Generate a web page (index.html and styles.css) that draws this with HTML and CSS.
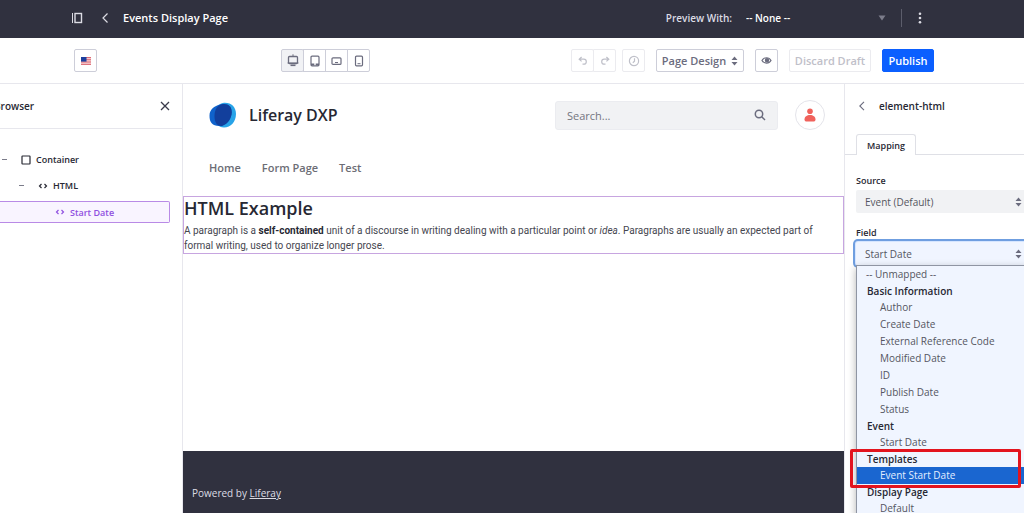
FILE: index.html
```
<!DOCTYPE html>
<html lang="en">
<head>
    <meta charset="utf-8">
    <meta name="viewport" content="width=device-width, initial-scale=1">
    <title>Events Display Page</title>
    <link rel="stylesheet" href="styles.css">
</head>
<body>
<header class="topbar">
    <button class="icon-btn" aria-label="Toggle product menu">
        <svg width="12" height="12" viewBox="0 0 12 12" fill="none" stroke="currentColor"><path d="M1.500 1v10" stroke-width="1"/><rect x="4" y="1.500" width="6.500" height="9" stroke-width="1.400"/></svg>
    </button>
    <a class="back" href="#" aria-label="Back">
        <svg width="8" height="12" viewBox="0 0 8 12" fill="none" stroke="currentColor" stroke-width="1.200"><path d="M6.500 1.500 2 6l4.500 4.500"/></svg>
    </a>
    <h1 class="topbar-title">Events Display Page</h1>
    <div class="preview">
        <label for="preview-with">Preview With:</label>
        <span class="preview-select">
            <select id="preview-with"><option>-- None --</option></select>
            <svg width="8" height="6" viewBox="0 0 8 6"><path d="M0.500 0.500h7L4 5.500z" fill="#7b7c8a"/></svg>
        </span>
    </div>
    <button class="icon-btn kebab" aria-label="Options">
        <svg width="4" height="12" viewBox="0 0 4 12" fill="currentColor"><circle cx="2" cy="1.700" r="1.300"/><circle cx="2" cy="6" r="1.300"/><circle cx="2" cy="10.300" r="1.300"/></svg>
    </button>
</header>

<div class="toolbar">
    <button class="btn btn-icon" aria-label="Language: English">
        <svg width="10" height="8" viewBox="0 0 10 8"><rect width="10" height="8" fill="#f4c9cd"/><path d="M0 .5h10M0 2.700h10M0 5h10M0 7.400h10" stroke="#dc6b75" stroke-width="1"/><rect width="5.500" height="4.600" fill="#1d3f9e"/></svg>
    </button>

    <div class="btn-group devices">
        <button class="btn btn-icon active" aria-label="Desktop">
            <svg width="12" height="13" viewBox="0 0 12 13" fill="none" stroke="currentColor"><rect x="1.500" y="2.500" width="9" height="7" rx="1" stroke-width="1.300"/><path d="M6 .3v2M.5 9h11" stroke-width="1"/><path d="M3.500 11.300h5" stroke-width="1.600"/></svg>
        </button>
        <button class="btn btn-icon" aria-label="Tablet">
            <svg width="10" height="12" viewBox="0 0 10 12" fill="none" stroke="currentColor"><rect x="1" y="1.200" width="8" height="9.600" rx="1" stroke-width="1.200"/><path d="M1 9.600h3.300M5.700 9.600H9" stroke-width="2"/></svg>
        </button>
        <button class="btn btn-icon" aria-label="Landscape phone">
            <svg width="11" height="10" viewBox="0 0 11 10" fill="none" stroke="currentColor"><rect x="1" y="1.800" width="9" height="6.600" rx="1" stroke-width="1.200"/><path d="M4 6.500h3" stroke-width="1"/></svg>
        </button>
        <button class="btn btn-icon" aria-label="Portrait phone">
            <svg width="10" height="12" viewBox="0 0 10 12" fill="none" stroke="currentColor"><rect x="1.500" y="1.200" width="7" height="9.600" rx="1" stroke-width="1.200"/><path d="M3.500 8.700h3" stroke-width="1"/></svg>
        </button>
    </div>

    <div class="actions">
        <div class="btn-group">
            <button class="btn btn-icon" aria-label="Undo" disabled>
                <svg width="10" height="10" viewBox="0 0 10 10" fill="none" stroke="currentColor" stroke-width="1.200"><path d="M3.600 1 1.200 3.200l2.400 2.200M1.500 3.200h4.300a2.500 2.500 0 0 1 0 5H4.500"/></svg>
            </button>
            <button class="btn btn-icon" aria-label="Redo" disabled>
                <svg width="10" height="10" viewBox="0 0 10 10" fill="none" stroke="currentColor" stroke-width="1.200"><path d="M6.400 1l2.400 2.200-2.400 2.200M8.500 3.200H4.200a2.500 2.500 0 0 0 0 5h1.300"/></svg>
            </button>
        </div>
        <button class="btn btn-icon history" aria-label="History" disabled>
            <svg width="12" height="12" viewBox="0 0 12 12" fill="none" stroke="currentColor" stroke-width="1.200"><circle cx="6" cy="6" r="4.600"/><path d="M6.500 3.200V6.200L4.800 7.700"/></svg>
        </button>
        <button class="btn btn-design">Page Design
            <svg width="7" height="10" viewBox="0 0 7 10" fill="currentColor"><path d="M3.500.5 6.500 4h-6zM3.500 9.500.5 6h6z"/></svg>
        </button>
        <button class="btn btn-icon" aria-label="Preview">
            <svg width="11" height="9" viewBox="0 0 11 9" fill="none" stroke="currentColor" stroke-width="1.200"><path d="M1 4.500C3 .8 8 .8 10 4.500 8 8 3 8 1 4.500z"/><circle cx="6" cy="4.300" r="1.600" fill="currentColor"/></svg>
        </button>
        <button class="btn btn-draft" disabled>Discard Draft</button>
        <button class="btn btn-primary">Publish</button>
    </div>
</div>

<div class="editor">
    <!-- Page structure tree -->
    <aside class="browser">
        <div class="browser-header">
            <h2 class="panel-title">Browser</h2>
            <button class="icon-btn" aria-label="Close">
                <svg width="10" height="10" viewBox="0 0 10 10" fill="none" stroke="#393a4a" stroke-width="1.300"><path d="M1 1l8 8M9 1L1 9"/></svg>
            </button>
        </div>
        <ul class="tree">
            <li class="tree-item">
                <span class="tree-toggle"></span>
                <svg width="10" height="10" viewBox="0 0 10 10" fill="none" stroke="currentColor" stroke-width="1.200"><rect x="1" y="1" width="8" height="8" rx=".5"/></svg>
                Container
            </li>
            <li class="tree-item level-2">
                <span class="tree-toggle"></span>
                <svg width="10" height="10" viewBox="0 0 10 10" fill="none" stroke="currentColor" stroke-width="1.200"><path d="M3.500 3 1.500 5l2 2M6.500 3l2 2-2 2"/></svg>
                HTML
            </li>
            <li class="tree-item level-3 selected">
                <svg width="10" height="10" viewBox="0 0 10 10" fill="none" stroke="currentColor" stroke-width="1.200"><path d="M3.500 3 1.500 5l2 2M6.500 3l2 2-2 2"/></svg>
                Start Date
            </li>
        </ul>
    </aside>

    <main class="page">
        <div class="page-header">
            <svg width="28" height="26" viewBox="0 0 28 26"><path d="M15 .8C22 .3 27.200 5 27 12c-.2 8-5 13.500-12 13.500-6 0-8.500-4-8.500-11C6.500 6 9 1.300 15 .8z" fill="#27a3e8"/><path d="M11.500 2.500C18 1 22.500 4 22.500 10.500 22.500 17 18 24 10 24 3.500 24 .3 20 .5 13.500.7 7.500 5 3.800 11.500 2.500z" fill="#0f62cb"/><path d="M14 2c5.500-.5 9 3 8.800 8.500-.3 6-4.300 11.500-9.800 13.500-5 .5-7.500-3.500-7.500-10C5.500 7.500 8.500 2.700 14 2z" fill="#123f9c"/></svg>
            <span class="site-name">Liferay DXP</span>
            <form class="search">
                <input type="text" placeholder="Search..." aria-label="Search">
                <button type="button" class="icon-btn" aria-label="Submit search">
                    <svg width="12" height="12" viewBox="0 0 12 12" fill="none" stroke="#6b6c7e" stroke-width="1.500"><circle cx="5" cy="5" r="3.700"/><path d="M7.700 7.700l3.300 3.300"/></svg>
                </button>
            </form>
            <button class="avatar" aria-label="User profile">
                <svg width="12" height="14" viewBox="0 0 12 14" fill="#f0625c"><circle cx="6" cy="3.200" r="2.800"/><path d="M.5 11.500C.5 8.500 3 7 6 7s5.500 1.500 5.500 4.500c0 1.500-1 2-2 2h-7c-1 0-2-.5-2-2z"/></svg>
            </button>
        </div>
        <nav class="page-nav">
            <a href="#">Home</a>
            <a href="#">Form Page</a>
            <a href="#">Test</a>
        </nav>
        <section class="fragment">
            <h2>HTML Example</h2>
            <p>A paragraph is a <strong>self-contained</strong> unit of a discourse in writing dealing with a particular point or <em>idea</em>. Paragraphs are usually an expected part of formal writing, used to organize longer prose.</p>
        </section>
        <footer class="page-footer">Powered by&nbsp;<a href="#">Liferay</a></footer>
    </main>

    <!-- Mapping panel -->
    <aside class="config">
        <div class="config-header">
            <a href="#" aria-label="Back to parent">
                <svg width="8" height="10" viewBox="0 0 8 10" fill="none" stroke="currentColor" stroke-width="1.100"><path d="M6 .8 1.800 5 6 9.200"/></svg>
            </a>
            <h2 class="panel-title">element-html</h2>
        </div>
        <div class="tabs"><button class="tab">Mapping</button></div>
        <div class="fields">
            <label for="source">Source</label>
            <div class="select">
                <select id="source"><option>Event (Default)</option></select>
                <svg width="7" height="10" viewBox="0 0 7 10" fill="#6b6c7e"><path d="M3.500.5 6.500 4h-6zM3.500 9.500.5 6h6z"/></svg>
            </div>
            <label for="field">Field</label>
            <div class="select open">
                <select id="field"><option>Start Date</option></select>
                <svg width="7" height="10" viewBox="0 0 7 10" fill="#6b6c7e"><path d="M3.500.5 6.500 4h-6zM3.500 9.500.5 6h6z"/></svg>
                <ul class="menu">
                    <li class="menu-empty">-- Unmapped --</li>
                    <li class="menu-group">Basic Information</li>
                    <li>Author</li>
                    <li>Create Date</li>
                    <li>External Reference Code</li>
                    <li>Modified Date</li>
                    <li>ID</li>
                    <li>Publish Date</li>
                    <li>Status</li>
                    <li class="menu-group">Event</li>
                    <li>Start Date</li>
                    <li class="menu-group callout-anchor">Templates<span class="callout"></span></li>
                    <li class="highlighted">Event Start Date</li>
                    <li class="menu-group">Display Page</li>
                    <li>Default</li>
                </ul>
            </div>
        </div>
    </aside>
</div>
</body>
</html>
```
FILE: styles.css
```
* {
    box-sizing: border-box;
}
body {
    display: flex;
    flex-direction: column;
    height: 100vh;
    margin: 0;
    overflow: hidden;
    background: #fff;
    color: #272833;
    font-family: "Open Sans", "Noto Sans", sans-serif;
    font-size: 10px;
}
h1, h2, p, ul {
    margin: 0;
    padding: 0;
}
ul {
    list-style: none;
}
svg {
    display: block;
    flex: none;
}
button, input, select {
    font: inherit;
    color: inherit;
}
select {
    appearance: none;
    border: none;
    background: none;
}
.icon-btn {
    padding: 0;
    border: none;
    background: none;
    cursor: pointer;
}
.panel-title {
    font-size: 10px;
    font-weight: 600;
}

/* Top bar */
.topbar {
    display: flex;
    flex: none;
    align-items: center;
    height: 38px;
    padding: 0 102px 3px 71px;
    background: #30313f;
    color: #dcdce4;
}
.back {
    margin: 0 14px 0 18px;
    color: inherit;
}
.topbar-title {
    color: #fff;
    font-size: 11px;
    font-weight: 600;
}
.preview {
    display: flex;
    align-items: center;
    gap: 14px;
    margin-left: auto;
    font-weight: 600;
}
.preview-select {
    display: flex;
    align-items: center;
    width: 140px;
}
.preview-select select {
    flex: 1;
    color: #fff;
}
.kebab {
    height: 18px;
    margin-left: 15px;
    padding-left: 16px;
    border-left: 1px solid #5c5d6b;
}

/* Toolbar */
.toolbar {
    display: flex;
    flex: none;
    align-items: center;
    height: 46px;
    padding: 0 90px 0 74px;
    border-bottom: 1px solid #e7e7ed;
}
.btn {
    display: flex;
    align-items: center;
    justify-content: center;
    height: 23px;
    padding: 0;
    background: #fff;
    border: 1px solid #cdced9;
    border-radius: 2px;
    color: #6b6c7e;
    font-size: 11px;
    font-weight: 600;
    cursor: pointer;
}
.btn:disabled {
    border-color: #ebebef;
    color: #bfc0c9;
}
.btn-icon {
    width: 23px;
}
.btn-icon.active {
    background: #f1f2f5;
}
.btn-group {
    display: flex;
}
.btn-group .btn + .btn {
    margin-left: -1px;
    border-radius: 0;
}
.btn-group .btn:last-child {
    border-radius: 0 2px 2px 0;
}
.devices {
    margin-left: 184px;
}
.actions {
    display: flex;
    gap: 11px;
    margin-left: auto;
}
.history {
    margin-left: -5px;
}
.btn-design {
    gap: 5px;
    width: 88px;
}
.btn-draft {
    width: 82px;
}
.btn-primary {
    width: 52px;
    background: #0b5fff;
    border-color: #0b5fff;
    color: #fff;
}

.editor {
    display: flex;
    flex: 1;
    min-height: 0;
}

/* Browser tree */
.browser {
    flex: none;
    width: 183px;
    overflow: hidden;
    border-right: 1px solid #e7e7ed;
}
.browser-header {
    display: flex;
    align-items: center;
    justify-content: space-between;
    height: 45px;
    margin-left: -6px;
    padding-right: 12px;
    border-bottom: 1px solid #e7e7ed;
}
.tree {
    display: flex;
    flex-direction: column;
    gap: 5px;
    padding: 20px 12px 0 0;
    font-size: 9px;
    font-weight: 600;
}
.tree-item {
    display: flex;
    align-items: center;
    gap: 5px;
    height: 21px;
    padding-left: 2px;
}
.tree-toggle {
    width: 5px;
    height: 1px;
    margin-right: 9px;
    background: #7b7c8a;
}
.level-2 {
    padding-left: 19px;
}
.level-3 {
    padding-left: 55px;
}
.selected {
    height: 22px;
    background: #f9f4ff;
    border: 1px solid #b98ae6;
    border-left: none;
    border-radius: 0 2px 2px 0;
    color: #9050e0;
}

/* Page being edited */
.page {
    display: flex;
    flex: 1;
    flex-direction: column;
    min-width: 0;
}
.page-header {
    display: flex;
    align-items: center;
    height: 62px;
    padding: 0 19px 0 26px;
}
.site-name {
    margin-left: 12px;
    font-size: 16px;
    font-weight: 600;
}
.search {
    display: flex;
    align-items: center;
    width: 223px;
    height: 29px;
    margin: 0 17px 0 auto;
    padding: 0 11px;
    background: #f1f2f4;
    border: 1px solid #ebecf0;
    border-radius: 3px;
}
.search input {
    flex: 1;
    min-width: 0;
    padding: 0;
    background: none;
    border: none;
    font-size: 11px;
}
.search input::placeholder {
    color: #74757f;
}
.avatar {
    display: flex;
    align-items: center;
    justify-content: center;
    width: 30px;
    height: 30px;
    padding: 0;
    background: #fff;
    border: 1px solid #e4e4ea;
    border-radius: 50%;
}
.page-nav {
    display: flex;
    align-items: center;
    gap: 21px;
    height: 42px;
    margin-bottom: 8px;
    padding-left: 26px;
    font-size: 11px;
}
.page-nav a {
    color: #6c6d75;
    font-weight: 600;
    text-decoration: none;
}
.fragment {
    border: 1px solid #c7a5e0;
}
.fragment h2 {
    font-size: 18px;
    font-weight: 600;
    line-height: 22px;
    margin-bottom: 4px;
}
.fragment p {
    padding-right: 20px;
    color: #45464f;
    font-family: Roboto, "Open Sans", sans-serif;
    line-height: 15px;
}
.fragment strong {
    color: #272833;
}
.page-footer {
    display: flex;
    align-items: center;
    height: 62px;
    margin-top: auto;
    padding: 22px 9px 0;
    background: #30313f;
    color: #dcdce4;
}
.page-footer a {
    color: inherit;
}

/* Mapping panel */
.config {
    flex: none;
    width: 180px;
    border-left: 1px solid #e7e7ed;
}
.config-header {
    display: flex;
    align-items: center;
    gap: 13px;
    height: 44px;
    padding-left: 13px;
}
.config-header a {
    color: #6b6c7e;
}
.tabs {
    display: flex;
    height: 27px;
    padding-left: 11px;
    border-bottom: 1px solid #dfe0e6;
}
.tab {
    width: 60px;
    height: 21px;
    margin-top: 6px;
    padding: 0;
    background: #fff;
    border: 1px solid #dfe0e6;
    border-bottom: none;
    border-radius: 3px 3px 0 0;
    font-size: 9px;
    font-weight: 600;
}
.fields {
    margin-right: -4px;
    padding: 17px 0 0 11px;
}
.fields label {
    display: block;
    height: 18px;
    font-size: 9px;
    font-weight: 600;
    line-height: 18px;
}
.select {
    position: relative;
    display: flex;
    align-items: center;
    height: 23px;
    margin-bottom: 11px;
    padding-right: 6px;
    background: #f1f2f4;
    border-radius: 2px;
    color: #55565f;
}
.select select {
    flex: 1;
    padding: 0 9px;
    outline: none;
}
.select.open {
    background: #f0f5ff;
    box-shadow: 0 0 0 1px #d6e6ff, 0 0 0 3px #6f9ee0;
}
.menu {
    position: absolute;
    top: 23px;
    left: 0;
    right: 0;
    background: #f0f5ff;
    border: 1px solid #8f95a3;
    border-bottom: none;
    box-shadow: 0 3px 8px rgba(0, 0, 0, 0.3);
}
.menu li {
    height: 17px;
    padding-left: 23px;
    line-height: 16px;
    white-space: nowrap;
}
.menu .menu-empty {
    padding-left: 9px;
}
.menu .menu-group {
    height: 16px;
    padding-left: 10px;
    color: #272833;
    font-weight: 600;
}
.menu .highlighted {
    background: #1a66d0;
    color: #e3eeff;
}
.callout-anchor {
    position: relative;
}
.callout {
    position: absolute;
    top: -2px;
    left: -7px;
    width: 171px;
    height: 39px;
    border: 3px solid #e3141e;
    border-radius: 2px;
}
```
